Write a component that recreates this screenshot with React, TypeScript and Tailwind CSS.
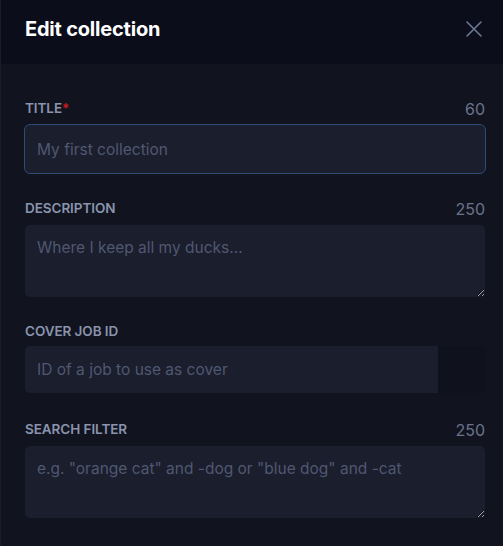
import React from "react";

function Label({ text, required, count, mb }: { text: string; required?: boolean; count?: string; mb: string }) {
  return (
    <div className={`flex items-baseline justify-between h-[16px] ${mb}`}>
      <span className="text-[13.5px] font-semibold uppercase text-[#8a94ad] leading-[16px] tracking-[-0.005em]">
        {text}
        {required && <span className="text-[#d11a1a]">*</span>}
      </span>
      {count && <span className="text-[16px] text-[#6a738c] leading-[16px] translate-y-[2px]">{count}</span>}
    </div>
  );
}

export default function App() {
  return (
    <div
      className="w-[503px] h-[546px] bg-[#11131f] border-l border-[#1a1d2a] overflow-hidden flex flex-col"
      style={{ fontFamily: "Inter, 'Noto Sans', sans-serif" }}
    >
      <div className="h-[64px] shrink-0 bg-[#0b0e1a] flex items-center justify-between pl-[24px] pr-[20px]">
        <h1 className="text-[20px] font-bold text-white -mt-[6px] tracking-[-0.01em]">Edit collection</h1>
        <svg width="18" height="18" viewBox="0 0 18 18" className="-mt-[6px]" fill="none" stroke="#6b7794" strokeWidth="1.6" strokeLinecap="round">
          <path d="M2 2L16 16M16 2L2 16" />
        </svg>
      </div>
      <div className="flex flex-col pl-[24px] pr-[18px] pt-[35px]">
        <Label text="Title" required count="60" mb="mb-[9px]" />
        <input
          autoFocus
          placeholder="My first collection"
          className="h-[50px] -mx-[1px] rounded-[6px] border border-[#2d4a78] bg-[#1b1e2d] px-[12px] text-[15.5px] text-white placeholder:text-[#4f5871] outline-none caret-white"
        />
        <div className="h-[25px]" />
        <Label text="Description" count="250" mb="mb-[10px]" />
        <textarea
          placeholder="Where I keep all my ducks..."
          className="h-[72px] w-full rounded-[5px] bg-[#1b1e2d] px-[12px] pt-[13px] text-[15.5px] leading-[20px] text-white placeholder:text-[#4f5871] outline-none block"
        />
        <div className="h-[26px]" />
        <Label text="Cover job ID" mb="mb-[7px]" />
        <div className="flex h-[47px] rounded-[5px] overflow-hidden">
          <input
            placeholder="ID of a job to use as cover"
            className="flex-1 min-w-0 bg-[#1b1e2d] px-[12px] text-[15.5px] text-white placeholder:text-[#4f5871] outline-none"
          />
          <div className="w-[47px] bg-[#0f111c]" />
        </div>
        <div className="h-[27px]" />
        <Label text="Search filter" count="250" mb="mb-[10px]" />
        <textarea
          placeholder={'e.g. "orange cat" and -dog or "blue dog" and -cat'}
          className="h-[72px] w-full rounded-[5px] bg-[#1b1e2d] px-[12px] pt-[13px] text-[15.5px] leading-[20px] text-white placeholder:text-[#4f5871] outline-none block"
        />
      </div>
    </div>
  );
}
